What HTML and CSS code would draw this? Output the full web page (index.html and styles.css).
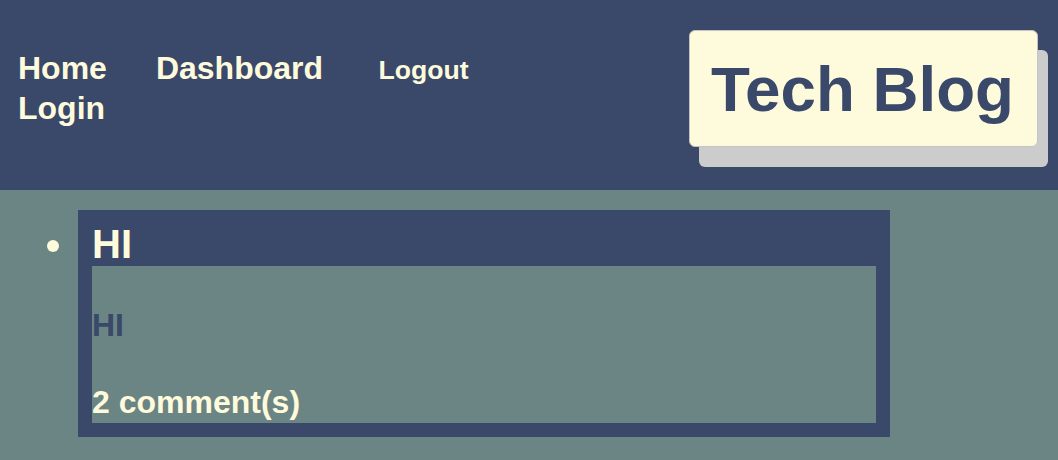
FILE: index.html
```html
<!DOCTYPE html>
<html lang="en">
<head>
<meta charset="utf-8">
<title>Tech Blog</title>
<link rel="stylesheet" href="styles.css">
</head>
<body>
<header class="site-header">
  <nav class="nav">
    <a class="nav-link nav-home" href="#">Home</a>
    <a class="nav-link nav-dash" href="#">Dashboard</a>
    <a class="nav-link nav-logout" href="#">Logout</a>
    <a class="nav-link nav-login" href="#">Login</a>
  </nav>
  <div class="brand">Tech Blog</div>
</header>
<main class="main">
  <ul class="posts">
    <li class="post">
      <div class="card">
        <h2 class="card-title">HI</h2>
        <div class="card-body">
          <p class="card-text">HI</p>
          <p class="card-comments">2 comment(s)</p>
        </div>
      </div>
    </li>
  </ul>
</main>
</body>
</html>
```
FILE: styles.css
```css
html, body {
  margin: 0;
  padding: 0;
}
body {
  font-family: "Liberation Sans", Arial, Helvetica, sans-serif;
  font-weight: bold;
  background: #6b8584;
  color: #fefadc;
  min-height: 460px;
}
.site-header {
  box-sizing: border-box;
  height: 190px;
  background: #3a486a;
  display: flex;
  justify-content: space-between;
  align-items: flex-start;
  padding: 30px 20px 0 18px;
}
.nav {
  display: flex;
  flex-wrap: wrap;
  align-items: baseline;
  width: 500px;
  margin-top: 18px;
  font-size: 32px;
  line-height: 40px;
}
.nav-link {
  color: #fefadc;
  text-decoration: none;
}
.nav-home {
  margin-right: 49px;
}
.nav-dash {
  margin-right: 55.5px;
}
.nav-logout {
  font-size: 26.6px;
  line-height: 30px;
}
.brand {
  background: #fefadc;
  color: #3a486a;
  border: 1px solid #c4c4c4;
  border-radius: 6px;
  box-shadow: 10px 20px 0 #cccccc;
  font-size: 63.7px;
  line-height: 74px;
  padding: 21px 23px 20px 21px;
}
.main {
  padding: 20px 0 24px;
}
.posts {
  margin: 0;
  padding: 0 0 0 78px;
  width: 812px;
}
.post {
  font-size: 40px;
  list-style: disc;
}
.post::marker {
  color: #fefadc;
}
.card {
  background: #3a486a;
  padding: 14px;
}
.card-title {
  margin: 0;
  padding: 0 0 2px;
  font-size: 40px;
  line-height: 40px;
  color: #fefadc;
}
.card-body {
  background: #6b8584;
  padding: 0 0 2px;
}
.card-text {
  margin: 0;
  padding-top: 41px;
  font-size: 32px;
  line-height: 37px;
  color: #3a486a;
}
.card-comments {
  margin: 0;
  padding-top: 39.5px;
  font-size: 32px;
  line-height: 37px;
  color: #fefadc;
}
```
